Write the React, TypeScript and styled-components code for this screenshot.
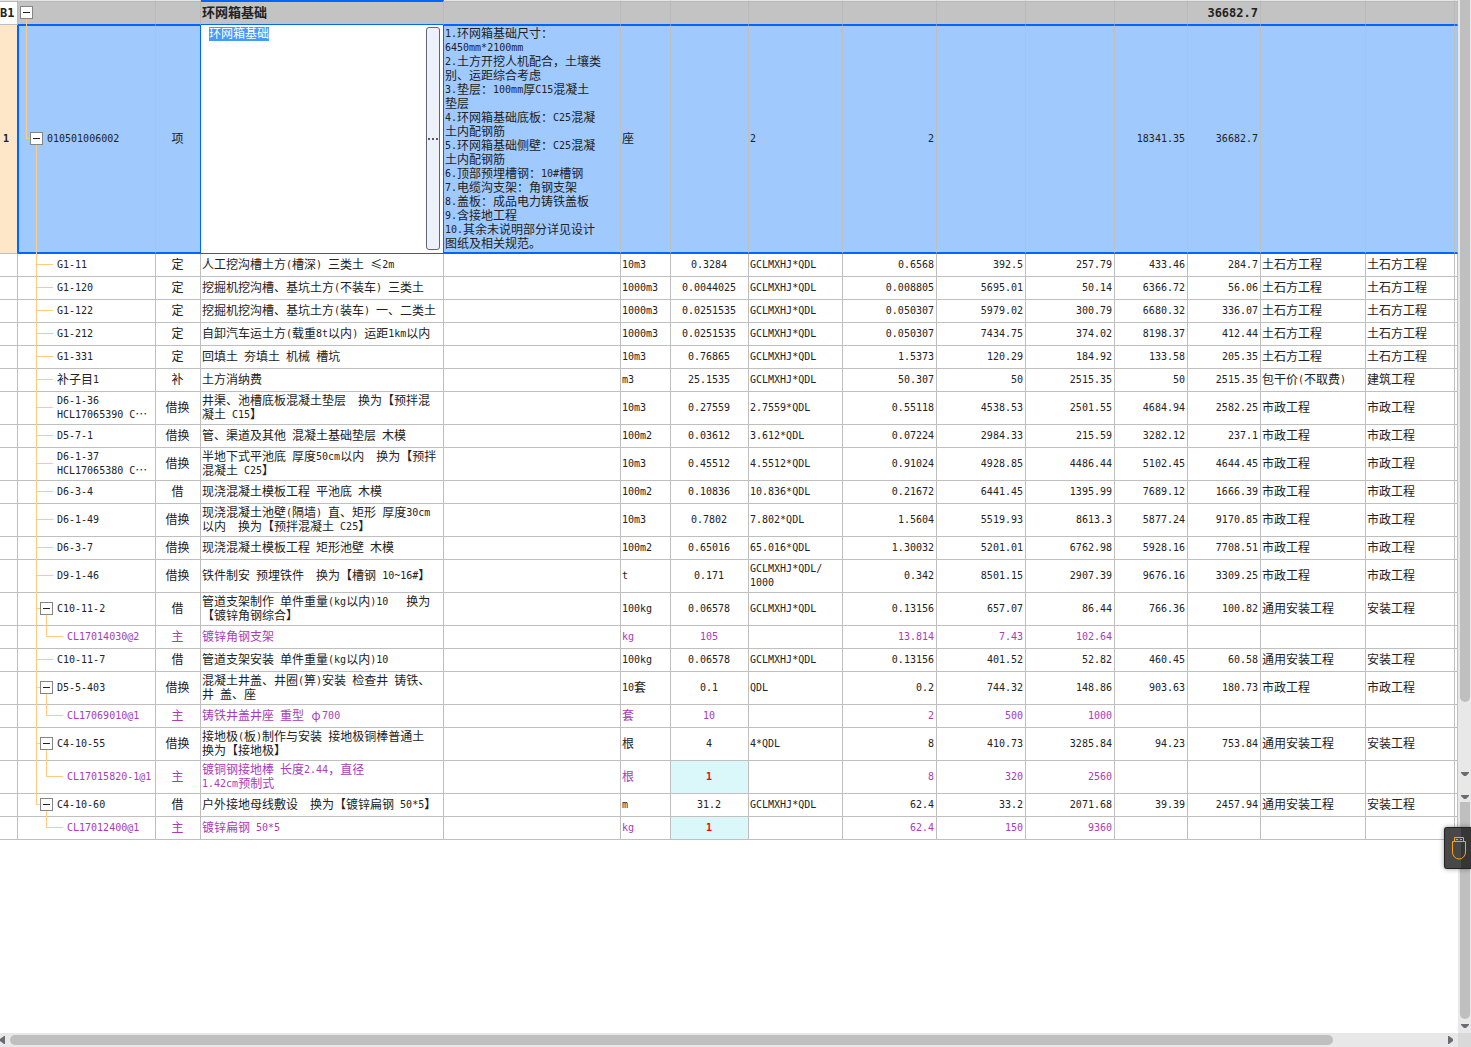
import React, { useEffect, useRef, useState } from "react";
import styled, { createGlobalStyle, css } from "styled-components";

const GlobalStyle = createGlobalStyle`
  *, *::before, *::after { box-sizing: border-box; }
  body {
    margin: 0;
    background: #fff;
    color: #222;
    font-family: "Liberation Sans", "Noto Sans CJK SC", sans-serif;
    font-size: 12px;
    line-height: 14px;
  }
  button, textarea { font: inherit; color: inherit; margin: 0; padding: 0; }
`;

const BLUE = "#0066ff";
const LINE = "#bfbfbf";
const BRANCH = "#ffcb80";

type Align = "left" | "center" | "right";
type Tone = "item" | "material";

const Screen = styled.div`
  position: relative;
  display: grid;
  grid-template-columns: minmax(0, 1fr) 13px;
  grid-template-rows: minmax(0, 1fr) 14px;
  height: 100vh;
`;

const SheetArea = styled.main`
  min-width: 0;
  overflow: hidden;
`;

const Sheet = styled.table`
  width: 100%;
  table-layout: fixed;
  border-collapse: separate;
  border-spacing: 0;
`;

const Column = styled.col<{ $width?: number }>`
  width: ${(p) => (p.$width ? `${p.$width}px` : "auto")};
`;

const cellBase = css`
  padding: 0 2px 0 1px;
  border-right: 1px solid ${LINE};
  border-bottom: 1px solid ${LINE};
  vertical-align: middle;
  white-space: pre;
`;

const Cell = styled.td<{ $align?: Align; $flagged?: boolean }>`
  ${cellBase}
  text-align: ${(p) => p.$align ?? "left"};
  overflow: hidden;
  ${(p) =>
    p.$flagged &&
    css`
      background: #daf8f9;
      color: #f00;
      font-weight: 700;
    `}
`;

const RowHead = styled.th`
  ${cellBase}
  padding: 0 0 0 3px;
  overflow: hidden;
  text-align: left;
  font-weight: 700;
`;

const CodeCell = styled.td<{ $indent: number }>`
  ${cellBase}
  position: relative;
  padding: 0 0 0 ${(p) => p.$indent}px;
`;

const Row = styled.tr<{ $tall: boolean; $tone: Tone }>`
  height: ${(p) => (p.$tall ? 33 : 23)}px;
  color: ${(p) => (p.$tone === "material" ? "#a73cb5" : "inherit")};
`;

const GroupRow = styled.tr`
  height: 25px;
  font-size: 13px;
  font-weight: 700;
  background: #c3c3c3;
  ${Cell}, ${CodeCell}, ${RowHead} {
    border-top: 1px solid #e6e6e6;
    border-right-color: #b9b9b9;
    border-bottom-color: ${BLUE};
    box-shadow: inset 0 1px 0 #b9b9b9;
  }
  ${RowHead} {
    padding: 0;
    background: #fff;
    border-bottom-color: ${LINE};
  }
  ${Cell}:nth-child(4) {
    border-top: 2px solid ${BLUE};
    box-shadow: none;
  }
`;

const ActiveRow = styled.tr`
  height: 229px;
  background: #a0c9fe;
  ${Cell}, ${CodeCell} {
    border-top: 1px solid ${BLUE};
    border-bottom: 2px solid ${BLUE};
  }
  ${CodeCell} { border-left: 1px solid ${BLUE}; }
  ${Cell}:nth-child(3) { border-right-color: ${BLUE}; }
  ${RowHead} {
    background: #fee6c8;
    border-right-color: ${BLUE};
  }
`;

const EditorCell = styled.td`
  height: 1px;
  padding: 0;
  background: #fff;
  border-right: 1px solid ${BLUE};
  border-bottom: 1px solid ${BLUE};
`;

const Editor = styled.div`
  display: flex;
  height: 100%;
  padding: 2px 3px 3px 8px;
`;

const EditorInput = styled.textarea`
  flex: 1;
  min-width: 0;
  border: 0;
  outline: 0;
  resize: none;
  overflow: hidden;
  background: transparent;
  line-height: 14px;
  &::selection { background: #439aff; color: #fff; }
`;

const MoreButton = styled.button`
  flex: none;
  display: flex;
  align-items: center;
  justify-content: center;
  width: 14px;
  border: 1px solid #63666b;
  border-radius: 3px;
  background: #edf1fa;
`;

const Latin = styled.span`
  font-family: "DejaVu Sans Mono", monospace;
  font-size: 10px;
  line-height: 0;
  vertical-align: 1px;
  ${GroupRow} & {
    font-size: 12px;
    vertical-align: baseline;
  }
`;

const WideSymbol = styled.span`
  display: inline-block;
  width: 12px;
  text-align: center;
  font-family: "Noto Sans CJK SC", sans-serif;
  line-height: 0;
`;

const Toggle = styled.button<{ $left: number }>`
  position: absolute;
  left: ${(p) => p.$left}px;
  top: calc(50% - 7px);
  display: flex;
  align-items: center;
  justify-content: center;
  width: 13px;
  height: 13px;
  border: 1px solid #858585;
  background: #fff;
`;

const Minus = styled.span`
  width: 7px;
  height: 1px;
  background: #222;
`;

type RailSpan = "full" | "upper" | "lower";

const Rail = styled.span<{ $left: number; $span: RailSpan }>`
  position: absolute;
  left: ${(p) => p.$left}px;
  top: ${(p) => (p.$span === "lower" ? "calc(50% + 6px)" : "-1px")};
  bottom: ${(p) => (p.$span === "upper" ? "50%" : "-2px")};
  width: 1px;
  background: ${BRANCH};
  z-index: 1;
`;

const Branch = styled.span<{ $left: number; $width: number }>`
  position: absolute;
  left: ${(p) => p.$left}px;
  top: calc(50% - 1px);
  width: ${(p) => p.$width}px;
  height: 1px;
  background: ${BRANCH};
`;

const VerticalBars = styled.aside`
  display: flex;
  flex-direction: column;
  background: #e8e8e8;
`;

const VerticalBar = styled.div<{ $share: number }>`
  flex: ${(p) => p.$share} 1 0;
  display: flex;
  flex-direction: column;
  align-items: center;
`;

const VerticalThumb = styled.div`
  flex: 1;
  width: 10px;
  background: #bfbfbf;
  border-radius: 0 0 5px 5px;
`;

const ArrowButton = styled.button<{ $length: number; $gap: number }>`
  flex: 0 0 ${(p) => p.$length}px;
  display: flex;
  align-items: flex-end;
  justify-content: center;
  border: 0;
  background: none;
  padding-bottom: ${(p) => p.$gap}px;
`;

const HorizontalBar = styled.div`
  display: flex;
  align-items: center;
  background: #e8e8e8;
`;

const HorizontalTrack = styled.div`
  flex: 1;
  height: 10px;
`;

const HorizontalThumb = styled.div`
  width: 92%;
  height: 10px;
  border-radius: 5px;
  background: #bfbfbf;
`;

const SideArrow = styled.button`
  display: flex;
  align-items: center;
  width: 10px;
  height: 14px;
  border: 0;
  background: none;
`;

const Corner = styled.div`
  background: #d9d9d9;
`;

const DongleButton = styled.button`
  position: absolute;
  right: 0;
  top: 827px;
  width: 27px;
  height: 42px;
  padding-left: 2px;
  display: flex;
  align-items: center;
  justify-content: center;
  border: 1px solid #222;
  border-right: 0;
  border-radius: 3px 0 0 3px;
  background: linear-gradient(90deg, #484848 0 16px, #363636 16px);
  box-shadow: 0 0 5px rgba(0, 0, 0, 0.4);
  z-index: 2;
`;

/* Half-width characters are set in a monospaced face half as wide as a Chinese glyph;
   symbols such as the ellipsis take the width of a full Chinese glyph. */
function Mixed({ text }: { text: string }) {
  const runs = text.match(/[\x20-\x7e]+|[…≤φ]|[^\x20-\x7e…≤φ]+/g) ?? [];
  return (
    <>
      {runs.map((run, i) => {
        if (/^[\x20-\x7e]/.test(run)) return <Latin key={i}>{run}</Latin>;
        if (/^[…≤φ]/.test(run)) return <WideSymbol key={i}>{run}</WideSymbol>;
        return <React.Fragment key={i}>{run}</React.Fragment>;
      })}
    </>
  );
}

function ToggleBox({ left, label }: { left: number; label: string }) {
  return (
    <Toggle type="button" $left={left} aria-label={label} aria-expanded>
      <Minus />
    </Toggle>
  );
}

const DownArrow = () => (
  <svg width="8" height="4" viewBox="0 0 8 4" aria-hidden="true">
    <path d="M0 0h8v1L5 4H3L0 1z" fill="#6b6b73" />
  </svg>
);

const SideGlyph = ({ d }: { d: string }) => (
  <svg width="5" height="8" viewBox="0 0 5 8" aria-hidden="true">
    <path d={d} fill="#6b6b73" />
  </svg>
);

const columnWidths = [18, 138, 45, 243, 177, 50, 78, 94, 94, 89, 89, 73, 73, 105, 89];
const aligns: Align[] = [
  "left", "center", "left", "right", "right", "right", "right", "right", "left", "left",
];

const description = `1.环网箱基础尺寸：
6450mm*2100mm
2.土方开挖人机配合，土壤类
别、运距综合考虑
3.垫层：100mm厚C15混凝土
垫层
4.环网箱基础底板：C25混凝
土内配钢筋
5.环网箱基础侧壁：C25混凝
土内配钢筋
6.顶部预埋槽钢：10#槽钢
7.电缆沟支架：角钢支架
8.盖板：成品电力铸铁盖板
9.含接地工程
10.其余未说明部分详见设计
图纸及相关规范。`;

interface Item {
  code: string;
  kind: string;
  name: string;
  /* unit, content, expression, quantity, price, ..., fee class, major */
  values: string[];
  parent?: boolean;
  material?: boolean;
  flagged?: boolean;
  last?: boolean;
}

const G = "GCLMXHJ*QDL";
const TS = "土石方工程";
const SZ = "市政工程";
const TY = "通用安装工程";
const AZ = "安装工程";

const items: Item[] = [
  { code: "G1-11", kind: "定", name: "人工挖沟槽土方(槽深) 三类土 ≤2m", values: ["10m3", "0.3284", G, "0.6568", "392.5", "257.79", "433.46", "284.7", TS, TS] },
  { code: "G1-120", kind: "定", name: "挖掘机挖沟槽、基坑土方(不装车) 三类土", values: ["1000m3", "0.0044025", G, "0.008805", "5695.01", "50.14", "6366.72", "56.06", TS, TS] },
  { code: "G1-122", kind: "定", name: "挖掘机挖沟槽、基坑土方(装车) 一、二类土", values: ["1000m3", "0.0251535", G, "0.050307", "5979.02", "300.79", "6680.32", "336.07", TS, TS] },
  { code: "G1-212", kind: "定", name: "自卸汽车运土方(载重8t以内) 运距1km以内", values: ["1000m3", "0.0251535", G, "0.050307", "7434.75", "374.02", "8198.37", "412.44", TS, TS] },
  { code: "G1-331", kind: "定", name: "回填土 夯填土 机械 槽坑", values: ["10m3", "0.76865", G, "1.5373", "120.29", "184.92", "133.58", "205.35", TS, TS] },
  { code: "补子目1", kind: "补", name: "土方消纳费", values: ["m3", "25.1535", G, "50.307", "50", "2515.35", "50", "2515.35", "包干价(不取费)", "建筑工程"] },
  { code: "D6-1-36\nHCL17065390 C…", kind: "借换", name: "井渠、池槽底板混凝土垫层  换为【预拌混\n凝土 C15】", values: ["10m3", "0.27559", "2.7559*QDL", "0.55118", "4538.53", "2501.55", "4684.94", "2582.25", SZ, SZ] },
  { code: "D5-7-1", kind: "借换", name: "管、渠道及其他 混凝土基础垫层 木模", values: ["100m2", "0.03612", "3.612*QDL", "0.07224", "2984.33", "215.59", "3282.12", "237.1", SZ, SZ] },
  { code: "D6-1-37\nHCL17065380 C…", kind: "借换", name: "半地下式平池底 厚度50cm以内  换为【预拌\n混凝土 C25】", values: ["10m3", "0.45512", "4.5512*QDL", "0.91024", "4928.85", "4486.44", "5102.45", "4644.45", SZ, SZ] },
  { code: "D6-3-4", kind: "借", name: "现浇混凝土模板工程 平池底 木模", values: ["100m2", "0.10836", "10.836*QDL", "0.21672", "6441.45", "1395.99", "7689.12", "1666.39", SZ, SZ] },
  { code: "D6-1-49", kind: "借换", name: "现浇混凝土池壁(隔墙) 直、矩形 厚度30cm\n以内  换为【预拌混凝土 C25】", values: ["10m3", "0.7802", "7.802*QDL", "1.5604", "5519.93", "8613.3", "5877.24", "9170.85", SZ, SZ] },
  { code: "D6-3-7", kind: "借换", name: "现浇混凝土模板工程 矩形池壁 木模", values: ["100m2", "0.65016", "65.016*QDL", "1.30032", "5201.01", "6762.98", "5928.16", "7708.51", SZ, SZ] },
  { code: "D9-1-46", kind: "借换", name: "铁件制安 预埋铁件  换为【槽钢 10~16#】", values: ["t", "0.171", "GCLMXHJ*QDL/\n1000", "0.342", "8501.15", "2907.39", "9676.16", "3309.25", SZ, SZ] },
  { code: "C10-11-2", kind: "借", name: "管道支架制作 单件重量(kg以内)10   换为\n【镀锌角钢综合】", parent: true, values: ["100kg", "0.06578", G, "0.13156", "657.07", "86.44", "766.36", "100.82", TY, AZ] },
  { code: "CL17014030@2", kind: "主", name: "镀锌角钢支架", material: true, values: ["kg", "105", "", "13.814", "7.43", "102.64", "", "", "", ""] },
  { code: "C10-11-7", kind: "借", name: "管道支架安装 单件重量(kg以内)10", values: ["100kg", "0.06578", G, "0.13156", "401.52", "52.82", "460.45", "60.58", TY, AZ] },
  { code: "D5-5-403", kind: "借换", name: "混凝土井盖、井圈(箅)安装 检查井 铸铁、\n井 盖、座", parent: true, values: ["10套", "0.1", "QDL", "0.2", "744.32", "148.86", "903.63", "180.73", SZ, SZ] },
  { code: "CL17069010@1", kind: "主", name: "铸铁井盖井座 重型 φ700", material: true, values: ["套", "10", "", "2", "500", "1000", "", "", "", ""] },
  { code: "C4-10-55", kind: "借换", name: "接地极(板)制作与安装 接地极铜棒普通土\n换为【接地极】", parent: true, values: ["根", "4", "4*QDL", "8", "410.73", "3285.84", "94.23", "753.84", TY, AZ] },
  { code: "CL17015820-1@1", kind: "主", name: "镀铜钢接地棒 长度2.44，直径\n1.42cm预制式", material: true, flagged: true, values: ["根", "1", "", "8", "320", "2560", "", "", "", ""] },
  { code: "C4-10-60", kind: "借", name: "户外接地母线敷设  换为【镀锌扁钢 50*5】", parent: true, last: true, values: ["m", "31.2", G, "62.4", "33.2", "2071.68", "39.39", "2457.94", TY, AZ] },
  { code: "CL17012400@1", kind: "主", name: "镀锌扁钢 50*5", material: true, flagged: true, last: true, values: ["kg", "1", "", "62.4", "150", "9360", "", "", "", ""] },
];

function Tree({ item }: { item: Item }) {
  if (item.material) {
    return (
      <>
        {!item.last && <Rail $left={18} $span="full" />}
        <Rail $left={28} $span="upper" />
        <Branch $left={28} $width={17} />
      </>
    );
  }
  return (
    <>
      <Rail $left={18} $span={item.last ? "upper" : "full"} />
      <Branch $left={18} $width={item.parent ? 4 : 17} />
      {item.parent && (
        <>
          <Rail $left={28} $span="lower" />
          <ToggleBox left={22} label={`收起 ${item.code}`} />
        </>
      )}
    </>
  );
}

/* Each line of a cell is a block of its own, one line height tall. */
const Line = styled.div`
  height: 14px;
`;

function Lines({ text }: { text: string }) {
  return (
    <>
      {text.split("\n").map((line, i) => (
        <Line key={i}>
          <Mixed text={line} />
        </Line>
      ))}
    </>
  );
}

function ItemRow({ item }: { item: Item }) {
  const tall = [item.code, item.name, ...item.values].some((t) => t.includes("\n"));
  return (
    <Row $tall={tall} $tone={item.material ? "material" : "item"}>
      <Cell />
      <CodeCell $indent={item.material ? 49 : 39}>
        <Tree item={item} />
        <Lines text={item.code} />
      </CodeCell>
      <Cell $align="center">{item.kind}</Cell>
      <Cell><Lines text={item.name} /></Cell>
      <Cell />
      {item.values.map((value, i) => (
        <Cell key={i} $align={aligns[i]} $flagged={item.flagged && i === 1}>
          <Lines text={value} />
        </Cell>
      ))}
      <Cell />
    </Row>
  );
}

function NameEditor() {
  const field = useRef<HTMLTextAreaElement>(null);
  const [name, setName] = useState("环网箱基础");
  useEffect(() => {
    field.current?.focus({ preventScroll: true });
    field.current?.select();
  }, []);
  return (
    <Editor>
      <EditorInput
        ref={field}
        aria-label="名称"
        spellCheck={false}
        value={name}
        onChange={(e) => setName(e.target.value)}
      />
      <MoreButton type="button" aria-label="更多">
        <svg width="10" height="2" viewBox="0 0 10 2" aria-hidden="true">
          <path d="M0 0h2v2H0zM4 0h2v2H4zM8 0h2v2H8z" fill="#55585e" />
        </svg>
      </MoreButton>
    </Editor>
  );
}

const groupValues = ["", "", "", "", "", "", "", "36682.7", "", ""];
const activeValues = ["座", "", "2", "2", "", "", "18341.35", "36682.7", "", ""];

export default function App() {
  return (
    <>
      <GlobalStyle />
      <Screen lang="zh-CN">
        <SheetArea>
          <Sheet>
            <colgroup>
              {columnWidths.map((w, i) => <Column key={i} $width={w} />)}
              <Column />
            </colgroup>
            <tbody>
              <GroupRow>
                <RowHead scope="row"><Mixed text="B1" /></RowHead>
                <CodeCell $indent={0}>
                  <Rail $left={8} $span="lower" />
                  <ToggleBox left={2} label="收起 环网箱基础" />
                </CodeCell>
                <Cell />
                <Cell>环网箱基础</Cell>
                <Cell />
                {groupValues.map((v, i) => (
                  <Cell key={i} $align={aligns[i]}><Mixed text={v} /></Cell>
                ))}
                <Cell />
              </GroupRow>
              <ActiveRow>
                <RowHead scope="row"><Mixed text="1" /></RowHead>
                <CodeCell $indent={28}>
                  <Rail $left={7} $span="upper" />
                  <Branch $left={7} $width={4} />
                  <Rail $left={17} $span="lower" />
                  <ToggleBox left={11} label="收起 010501006002" />
                  <Mixed text="010501006002" />
                </CodeCell>
                <Cell $align="center">项</Cell>
                <EditorCell><NameEditor /></EditorCell>
                <Cell><Lines text={description} /></Cell>
                {activeValues.map((v, i) => (
                  <Cell key={i} $align={aligns[i]}><Mixed text={v} /></Cell>
                ))}
                <Cell />
              </ActiveRow>
              {items.map((item) => <ItemRow key={item.code} item={item} />)}
            </tbody>
          </Sheet>
        </SheetArea>
        <VerticalBars>
          <VerticalBar $share={781}>
            <VerticalThumb />
            <ArrowButton type="button" $length={79} $gap={5} aria-label="向下滚动"><DownArrow /></ArrowButton>
          </VerticalBar>
          <VerticalBar $share={252}>
            <ArrowButton type="button" $length={21} $gap={3} aria-label="下一页"><DownArrow /></ArrowButton>
            <VerticalThumb />
            <ArrowButton type="button" $length={14} $gap={5} aria-label="滚动到底部"><DownArrow /></ArrowButton>
          </VerticalBar>
        </VerticalBars>
        <HorizontalBar>
          <SideArrow type="button" aria-label="向左滚动"><SideGlyph d="M5 0v8H4L0 5V3l4-3z" /></SideArrow>
          <HorizontalTrack><HorizontalThumb /></HorizontalTrack>
          <SideArrow type="button" aria-label="向右滚动"><SideGlyph d="M0 0v8h1l4-3V3L1 0z" /></SideArrow>
        </HorizontalBar>
        <Corner />
        <DongleButton type="button" aria-label="加密锁">
          <svg width="14" height="23" viewBox="0 0 14 23" fill="none" stroke="#ffa11f" aria-hidden="true">
            <path d="M2.5 4.500V.5h9v4M.5 4.500h13V15a6.500 7 0 0 1-13 0z" />
            <path d="M4 2.500h2M8 2.500h2" />
          </svg>
        </DongleButton>
      </Screen>
    </>
  );
}
